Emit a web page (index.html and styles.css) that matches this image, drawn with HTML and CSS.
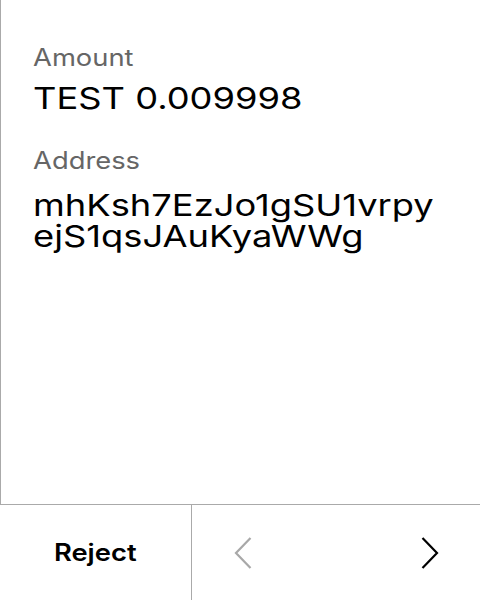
FILE: index.html
```html
<!DOCTYPE html>
<html>
<head>
<meta charset="utf-8">
<link rel="stylesheet" href="styles.css">
</head>
<body>
<div class="screen">
  <div class="content">
    <div class="label"><span class="wide">Amount</span></div>
    <div class="value amount"><span class="wide-l">TEST 0.009998</span></div>
    <div class="label address-label"><span class="wide">Address</span></div>
    <div class="value address"><span class="wide-l">mhKsh7EzJo1gSU1vrpy<br>ejS1qsJAuKyaWWg</span></div>
  </div>
  <div class="footer">
    <button class="reject"><span class="wide-c">Reject</span></button>
    <div class="pager">
      <span class="chev prev">
        <svg width="18" height="32" viewBox="0 0 18 32"><polyline points="16.5,1 2,16 16.5,31" fill="none" stroke="#a8a8a8" stroke-width="2.2"/></svg>
      </span>
      <span class="chev next">
        <svg width="18" height="32" viewBox="0 0 18 32"><polyline points="1.5,1 16,16 1.5,31" fill="none" stroke="#000" stroke-width="2.2"/></svg>
      </span>
    </div>
  </div>
</div>
</body>
</html>
```
FILE: styles.css
```css
* { box-sizing: border-box; }
html, body { margin: 0; padding: 0; background: #fff; }
body { font-family: Inter, "Noto Sans", sans-serif; color: #000; }
.screen { width: 480px; height: 600px; display: flex; flex-direction: column; }
.content {
  flex: 1;
  border-left: 1px solid #aaa;
  border-bottom: 1px solid #aaa;
  padding: 44px 0 0 32px;
}
.label { font-size: 24px; line-height: 28px; color: #666; }
.value { font-size: 30px; line-height: 34px; color: #000; white-space: nowrap; }
.wide { display: inline-block; transform: scaleX(1.14); transform-origin: left center; }
.wide-l { display: inline-block; transform: scaleX(1.21); transform-origin: left center; }
.wide-c { display: inline-block; transform: scaleX(1.14); transform-origin: center; }
.amount { margin-top: 9px; }
.address-label { margin-top: 32px; }
.address { margin-top: 15px; line-height: 31px; }
.footer { height: 95px; display: flex; }
.reject {
  width: 192px; border: none; border-right: 1px solid #aaa; background: #fff;
  font-family: inherit; font-size: 24px; font-weight: 600; color: #000; padding: 0;
}
.pager { flex: 1; display: flex; align-items: center; justify-content: space-between; padding: 0 41px 0 42px; }
.chev { display: flex; }
```
